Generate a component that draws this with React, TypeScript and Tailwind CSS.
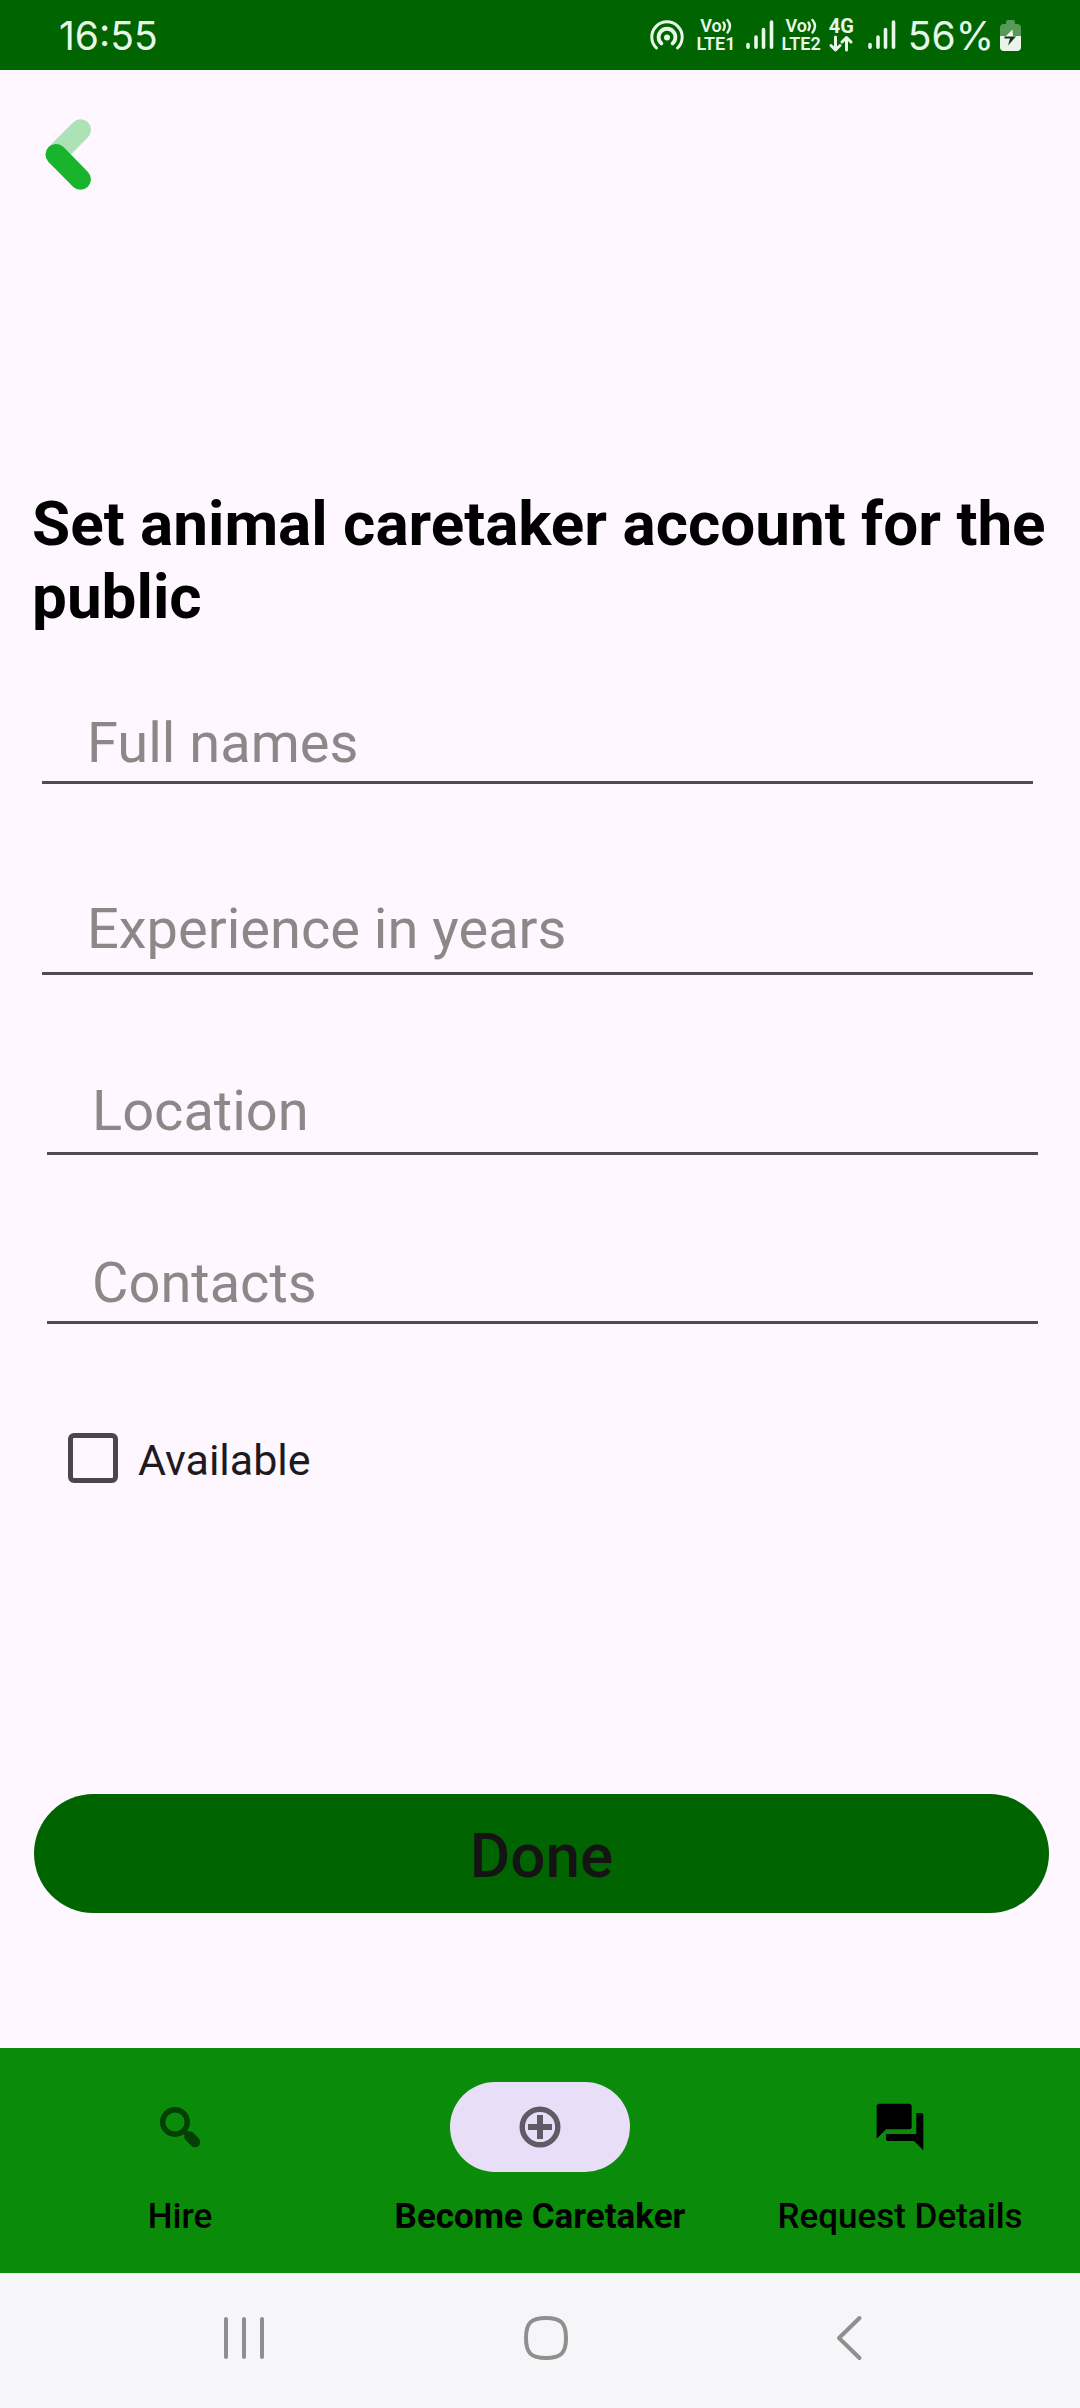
import { MdQuestionAnswer } from "react-icons/md";

function HotspotIcon() {
  return (
    <svg viewBox="0 0 34 31" className="h-[31px] w-[34px]" fill="none" stroke="currentColor" strokeLinecap="round">
      <path d="M6.5 28A15.2 15.2 0 1 1 27.5 28" strokeWidth="3" />
      <path d="M11.4 23.4A8.4 8.4 0 1 1 22.6 23.4" strokeWidth="3.8" />
      <circle cx="17" cy="17.5" r="3" fill="currentColor" stroke="none" />
    </svg>
  );
}

function SignalIcon() {
  return (
    <svg viewBox="0 0 28 30" className="h-[30px] w-[28px]" stroke="currentColor" strokeWidth="3.6" strokeLinecap="round">
      <path d="M2 24.5V27.3M10 17V27.3M17.5 9.5V27.3M25.5 2V27.3" />
    </svg>
  );
}

function VoIcon() {
  return (
    <svg viewBox="0 0 10 16" className="h-4 w-2.5" fill="none" stroke="currentColor" strokeWidth="2.4" strokeLinecap="round">
      <path d="M1.5 4.5Q4 8 1.5 12M5.5 2Q10.5 8 5.5 14.5" />
    </svg>
  );
}

function LteBadge({ name }: { name: string }) {
  return (
    <div className="flex flex-col items-center text-[18px] leading-[18px] font-semibold">
      <span className="flex items-center">
        Vo
        <VoIcon />
      </span>
      <span>{name}</span>
    </div>
  );
}

function BatteryIcon() {
  return (
    <svg viewBox="0 0 21 31" className="h-[31px] w-[21px]">
      <path d="M6 2Q6 0 8 0H13Q15 0 15 2V4H17Q21 4 21 8V17H0V8Q0 4 4 4H6Z" fill="#579a57" />
      <path d="M0 16H21V27Q21 31 17 31H4Q0 31 0 27Z" fill="#eaf5ea" />
      <path d="M12.5 9.5L4.5 17.5H10.5L13 16L12.5 9.5Z" fill="#eaf5ea" />
      <path d="M4.5 16.5H16L8 25.5L10 18.5H4.5Z" fill="#173317" />
    </svg>
  );
}

function StatusBar() {
  return (
    <header className="flex h-[70px] items-center justify-between bg-[#006400] px-[59px] text-[#e8f7e8]">
      <time className="font-[Inter,sans-serif] text-[39px] leading-none">16:55</time>
      <div className="flex items-center">
        <HotspotIcon />
        <div className="ml-3">
          <LteBadge name="LTE1" />
        </div>
        <div className="ml-2.5">
          <SignalIcon />
        </div>
        <div className="ml-2">
          <LteBadge name="LTE2" />
        </div>
        <div className="ml-2 flex flex-col items-center">
          <span className="text-[20px] leading-[17px] font-bold">4G</span>
          <svg viewBox="0 0 24 17" className="h-[17px] w-6" fill="none" stroke="currentColor" strokeWidth="3" strokeLinecap="round" strokeLinejoin="round">
            <path d="M6.5 2V14.5M2 10.5L6.5 15L11 10.5M17.5 15V2.5M13 7L17.5 2.5L22 7" />
          </svg>
        </div>
        <div className="ml-3.5">
          <SignalIcon />
        </div>
        <span className="ml-3 font-[Inter,sans-serif] text-[39px] leading-none">56%</span>
        <div className="ml-1.5">
          <BatteryIcon />
        </div>
      </div>
    </header>
  );
}

const fields = [
  { name: "fullNames", label: "Full names", type: "text", style: "mt-[77px] mr-[47px] ml-[42px] pb-[5px]" },
  { name: "experience", label: "Experience in years", type: "text", style: "mt-[112px] mr-[47px] ml-[42px] pb-[10px]" },
  { name: "location", label: "Location", type: "text", style: "mt-[103px] mr-[42px] ml-[47px] pb-[8px]" },
  { name: "contacts", label: "Contacts", type: "tel", style: "mt-[95px] mr-[42px] ml-[47px] pb-[5px]" },
];

function CaretakerForm() {
  return (
    <form className="flex flex-1 flex-col" onSubmit={(e) => e.preventDefault()}>
      {fields.map((f) => (
        <div key={f.name} className={`${f.style} border-b-[3px] border-[#4f4a54]`}>
          <input
            name={f.name}
            type={f.type}
            aria-label={f.label}
            placeholder={f.label}
            className="block h-[66px] w-full bg-transparent px-[45px] text-[56px] leading-[66px] text-[#1d1b20] outline-none placeholder:text-[#8c8888] placeholder:opacity-100"
          />
        </div>
      ))}
      <label className="mt-[109px] ml-[68px] flex items-start gap-5 self-start text-[43px] leading-[54px] text-[#1d1b20]">
        <input
          type="checkbox"
          name="available"
          className="size-[50px] appearance-none rounded-[6px] border-[5px] border-[#4a4650] checked:bg-[#4a4650]"
        />
        Available
      </label>
      <button
        type="submit"
        className="mr-[31px] ml-[34px] mt-auto mb-[135px] h-[119px] rounded-full bg-[#006400] pt-1 text-[62px] leading-[73px] font-medium text-[#141414]"
      >
        Done
      </button>
    </form>
  );
}

function SearchIcon() {
  return (
    <svg viewBox="0 0 42 42" className="size-[42px]" fill="none" stroke="#043f04">
      <circle cx="16" cy="16" r="12.3" strokeWidth="5.4" />
      <path d="M24.5 24.5L29 29" strokeWidth="5" />
      <path d="M30.5 30.5L36 36" strokeWidth="10.5" strokeLinecap="round" />
    </svg>
  );
}

function AddIcon() {
  return (
    <svg viewBox="0 0 42 42" className="size-[42px]" fill="none" stroke="#5e5a66">
      <circle cx="21" cy="21" r="17.8" strokeWidth="5.4" />
      <path d="M21 9V33M9 21H33" strokeWidth="6" strokeLinejoin="round" />
    </svg>
  );
}

const tabs = [
  { label: "Hire", icon: <SearchIcon />, pill: "", text: "font-medium" },
  { label: "Become Caretaker", icon: <AddIcon />, pill: "bg-[#e8def8]", text: "font-bold" },
  { label: "Request Details", icon: <MdQuestionAnswer size={56} />, pill: "", text: "font-medium" },
];

function TabBar() {
  return (
    <nav className="grid grid-cols-3 bg-[#0a8c0a] pt-[34px] pb-[36px]">
      {tabs.map((t) => (
        <button key={t.label} type="button" className="flex flex-col items-center gap-[25px] text-black">
          <span className={`${t.pill} flex h-[90px] w-[180px] items-center justify-center rounded-full`}>{t.icon}</span>
          <span className={`${t.text} text-[35px] leading-[40px] whitespace-nowrap`}>{t.label}</span>
        </button>
      ))}
    </nav>
  );
}

function SystemNav() {
  return (
    <footer className="flex h-[135px] items-center justify-between bg-[#f6f6f8] pr-[208px] pl-[220px] pb-[5px]">
      <button type="button" aria-label="Recent apps">
        <svg viewBox="0 0 46 46" className="size-[46px]" stroke="#8f8f8f" strokeWidth="4" strokeLinecap="round">
          <path d="M6 4V42M24 4V42M42 4V42" />
        </svg>
      </button>
      <button type="button" aria-label="Home">
        <svg viewBox="0 0 46 46" className="size-[46px]" fill="none" stroke="#8f8f8f" strokeWidth="4">
          <path d="M23 3C38 3 43 8 43 23S38 43 23 43S3 38 3 23S8 3 23 3Z" />
        </svg>
      </button>
      <button type="button" aria-label="Back">
        <svg viewBox="0 0 46 46" className="size-[46px]" fill="none" stroke="#8f8f8f" strokeWidth="4" strokeLinecap="round" strokeLinejoin="round">
          <path d="M33.5 3L13 23L33.5 43" />
        </svg>
      </button>
    </footer>
  );
}

export default function App() {
  return (
    <div className="flex min-h-screen flex-col bg-[#fef7ff] font-[Roboto,sans-serif]">
      <StatusBar />
      <main className="flex flex-1 flex-col">
        <button type="button" aria-label="Go back" className="mt-[49px] ml-[45px] self-start">
          <svg viewBox="0 0 47 71" className="h-[71px] w-[47px]" fill="none" strokeWidth="21" strokeLinecap="round">
            <path d="M35.5 10.8L11 35.5" stroke="#ade1b6" />
            <path d="M11 35.5L35.5 60.3" stroke="#18b52c" />
          </svg>
        </button>
        <h1 className="mt-[297px] pr-5 pl-8 text-[62px] leading-[73px] font-bold text-black">
          Set animal caretaker account for the public
        </h1>
        <CaretakerForm />
      </main>
      <TabBar />
      <SystemNav />
    </div>
  );
}
